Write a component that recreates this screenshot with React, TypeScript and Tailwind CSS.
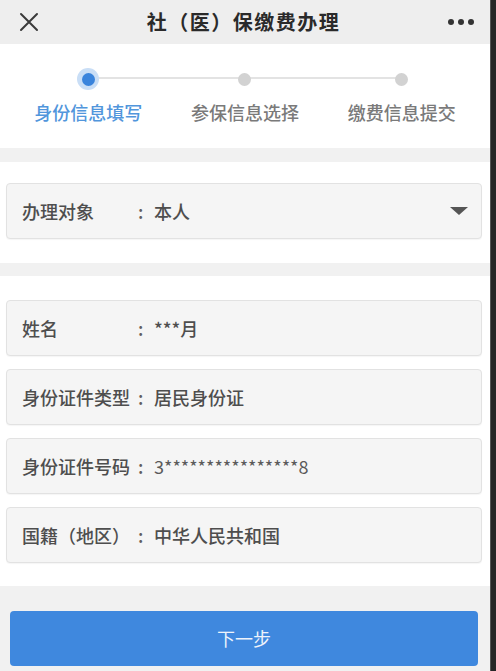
import React from "react";

const font = { fontFamily: '"Noto Sans CJK SC", "Noto Sans", sans-serif' };

function Row({ label, value, select, thin }: { label: string; value: string; select?: boolean; thin?: boolean }) {
  return (
    <div className="ml-[6px] mr-[8px] flex h-[56px] items-center rounded-[4px] border border-[#e2e2e2] bg-[#f5f5f5] pl-[15px] pr-[11px] text-[18px] font-medium text-[#4e4e4e] shadow-[0_1px_1px_rgba(0,0,0,0.04)]">
      <span className="w-[116px] shrink-0 whitespace-nowrap">{label}</span>
      <span className="w-[16px] shrink-0 text-[#606060]">:</span>
      <span className={"flex-1 whitespace-nowrap " + (thin ? "font-normal text-[#5a5a5a]" : "")}>{value}</span>
      {select && (
        <svg width="20" height="10" viewBox="0 0 20 10" className="mr-[1px]">
          <path d="M1 1 H19 L10 9 Z" fill="#555" />
        </svg>
      )}
    </div>
  );
}

export default function App() {
  return (
    <div className="flex h-[671px] w-[496px] overflow-hidden bg-[#f1f1f1]" style={font}>
      <div className="flex w-[490px] flex-col">
        {/* header */}
        <div className="flex h-[44px] items-center justify-between bg-[#eeeeee] pl-[19px] pr-[16px]">
          <svg width="20" height="20" viewBox="0 0 20 20">
            <path d="M2 2 L18 18 M18 2 L2 18" stroke="#3a3a3a" strokeWidth="2" strokeLinecap="round" />
          </svg>
          <div className="text-[20px] font-bold tracking-[1.5px] text-[#2a2a2a]">社（医）保缴费办理</div>
          <div className="flex gap-[4px]">
            <span className="h-[6px] w-[6px] rounded-full bg-[#333]" />
            <span className="h-[6px] w-[6px] rounded-full bg-[#333]" />
            <span className="h-[6px] w-[6px] rounded-full bg-[#333]" />
          </div>
        </div>

        {/* stepper */}
        <div className="relative h-[104px] bg-white">
          <div className="absolute left-[88px] top-[33px] h-[2px] w-[313px] bg-[#e3e3e3]" />
          <div className="grid grid-cols-3 px-[10px] pt-[24px]">
            {[
              { t: "身份信息填写", active: true },
              { t: "参保信息选择", active: false },
              { t: "缴费信息提交", active: false },
            ].map((s, i) => (
              <div key={i} className="relative flex flex-col items-center">
                <div className="flex h-[22px] w-[22px] items-center justify-center">
                  {s.active ? (
                    <div className="flex h-[22px] w-[22px] items-center justify-center rounded-full bg-[#c9def6]">
                      <div className="h-[13px] w-[13px] rounded-full bg-[#3a84dc]" />
                    </div>
                  ) : (
                    <div className="h-[13px] w-[13px] rounded-full bg-[#d2d2d2]" />
                  )}
                </div>
                <div
                  className={
                    "mt-[9px] whitespace-nowrap text-[18px] font-medium leading-[26px] " +
                    (s.active ? "text-[#5196dc]" : "text-[#7a7a7a]")
                  }
                >
                  {s.t}
                </div>
              </div>
            ))}
          </div>
        </div>

        <div className="h-[14px]" />

        <div className="bg-white pb-[24px] pt-[21px]">
          <Row label="办理对象" value="本人" select />
        </div>

        <div className="h-[13px]" />

        <div className="flex flex-col gap-[13px] bg-white pb-[23px] pt-[24px]">
          <Row label="姓名" value="***月" />
          <Row label="身份证件类型" value="居民身份证" />
          <Row label="身份证件号码" value="3****************8" thin />
          <Row label="国籍（地区）" value="中华人民共和国" />
        </div>

        <div className="flex-1 pt-[25px]">
          <div className="ml-[10px] mr-[12px] flex h-[55px] items-center justify-center rounded-[4px] bg-[#3f88de] text-[18px] text-[#eef3fb]">
            下一步
          </div>
        </div>
      </div>
      <div className="w-[6px] border-l border-[#555] bg-[#262626]" />
    </div>
  );
}
